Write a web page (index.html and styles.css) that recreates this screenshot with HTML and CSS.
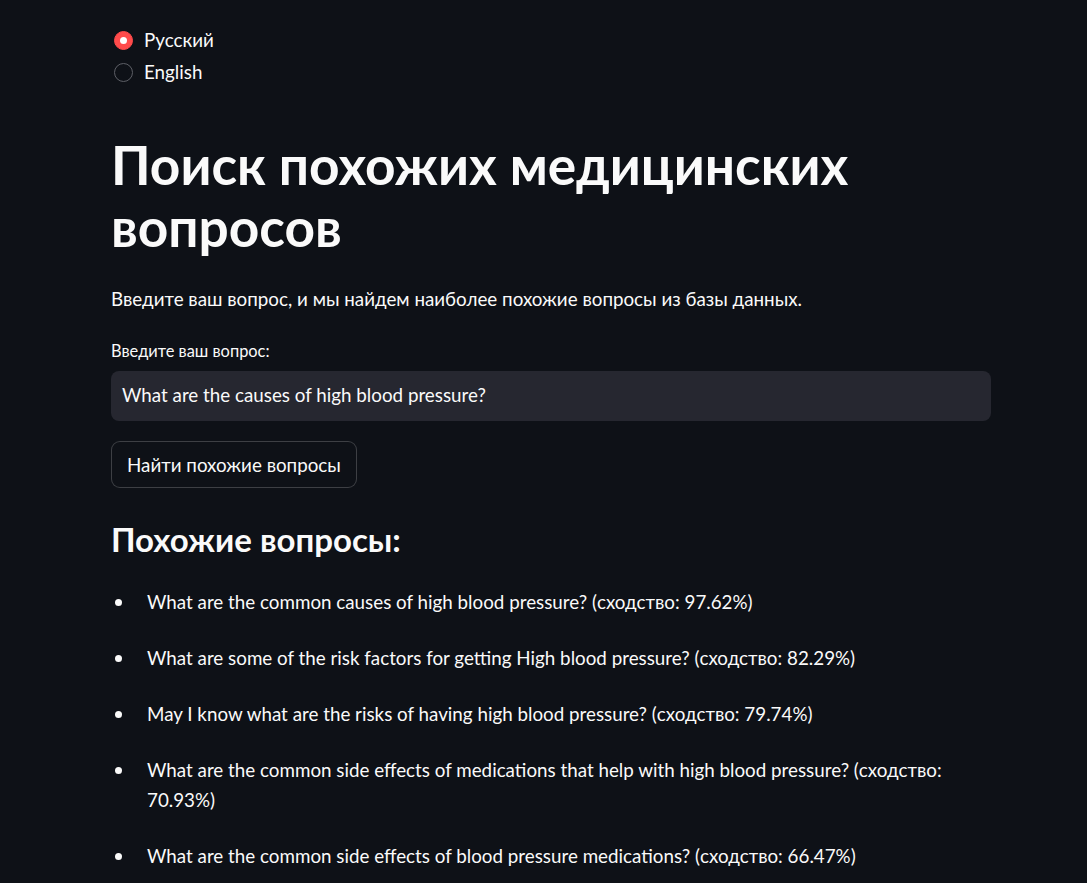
FILE: index.html
```html
<!DOCTYPE html>
<html lang="ru">
<head>
<meta charset="utf-8">
<title>Поиск похожих медицинских вопросов</title>
<link rel="stylesheet" href="styles.css">
</head>
<body>
<main class="main">
  <div class="radios">
    <label class="radio"><span class="dot dot-on"></span><span>Русский</span></label>
    <label class="radio"><span class="dot"></span><span>English</span></label>
  </div>
  <h1 class="title">Поиск похожих медицинских<br>вопросов</h1>
  <p class="intro">Введите ваш вопрос, и мы найдем наиболее похожие вопросы из базы данных.</p>
  <div class="field-label">Введите ваш вопрос:</div>
  <div class="input">What are the causes of high blood pressure?</div>
  <button class="btn">Найти похожие вопросы</button>
  <h3 class="subtitle">Похожие вопросы:</h3>
  <ul class="results">
    <li><span>What are the common causes of high blood pressure? (сходство: 97.62%)</span></li>
    <li><span>What are some of the risk factors for getting High blood pressure? (сходство: 82.29%)</span></li>
    <li><span>May I know what are the risks of having high blood pressure? (сходство: 79.74%)</span></li>
    <li><span>What are the common side effects of medications that help with high blood pressure? (сходство: 70.93%)</span></li>
    <li><span>What are the common side effects of blood pressure medications? (сходство: 66.47%)</span></li>
  </ul>
</main>
</body>
</html>
```
FILE: styles.css
```css
html, body {
  margin: 0;
  padding: 0;
  background: #0e1117;
  color: #fafafa;
  font-family: Lato, "Noto Sans", sans-serif;
  font-size: 18.8px;
  line-height: 30.7px;
}
.main {
  padding: 24px 0 0 111px;
  width: 880px;
}
.radios {
  display: flex;
  flex-direction: column;
}
.radio {
  display: flex;
  align-items: center;
  height: 32px;
  gap: 11px;
}
.dot {
  box-sizing: border-box;
  width: 19px;
  height: 19px;
  margin-left: 3px;
  border-radius: 50%;
  border: 1px solid #5d5f66;
  display: flex;
  align-items: center;
  justify-content: center;
}
.dot-on {
  background: #ff4b4b;
  border-color: #ff4b4b;
}
.dot-on::after {
  content: "";
  width: 7px;
  height: 7px;
  border-radius: 50%;
  background: #ffffff;
}
.title {
  margin: 45px 0 0;
  font-size: 53.2px;
  line-height: 62px;
  font-weight: 700;
}
.intro {
  margin: 27px 0 0;
}
.field-label {
  margin-top: 22px;
  font-size: 16.4px;
  line-height: 27px;
}
.input {
  box-sizing: border-box;
  margin-top: 7px;
  width: 880px;
  height: 50px;
  padding: 0 11px;
  display: flex;
  align-items: center;
  background: #262730;
  border-radius: 8px;
}
.btn {
  display: block;
  box-sizing: border-box;
  margin-top: 20px;
  height: 47px;
  padding: 0 15px;
  background: #0e1117;
  color: #fafafa;
  border: 1px solid rgba(250, 250, 250, 0.2);
  border-radius: 9px;
  font-family: inherit;
  font-size: 18.8px;
}
.subtitle {
  margin: 31px 0 0;
  font-size: 33px;
  line-height: 40px;
  font-weight: 700;
}
.results {
  list-style: none;
  margin: 28px 0 0;
  padding: 0;
}
.results li {
  display: flex;
  align-items: flex-start;
  margin-bottom: 25.3px;
}
.results li::before {
  content: "";
  flex: none;
  width: 7px;
  height: 7px;
  margin: 12px 25px 0 4px;
  border-radius: 50%;
  background: #fafafa;
}
```
